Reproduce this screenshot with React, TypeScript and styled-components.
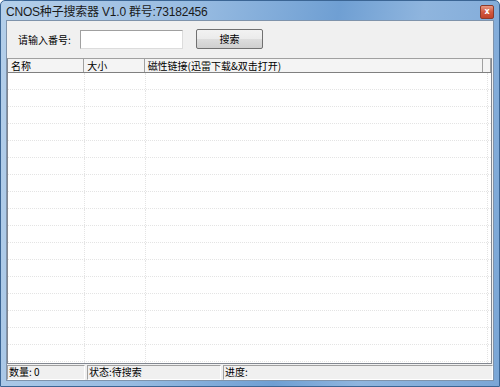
import React from 'react'
import styled, { createGlobalStyle } from 'styled-components'

const GlobalStyle = createGlobalStyle`
  html, body {
    margin: 0;
    padding: 0;
    background: #ffffff;
  }
  body {
    font-family: "Noto Sans CJK SC", "Liberation Sans", sans-serif;
    font-size: 10px;
  }
`

const Window = styled.div`
  width: 500px;
  height: 387px;
  box-sizing: border-box;
  display: flex;
  flex-direction: column;
  padding: 0 5px 5px 5px;
  background: linear-gradient(100deg, #b4cfea 0%, #97bbe1 35%, #6f9fd3 60%, #8fb5de 75%, #7aa6d6 100%);
  border: 1px solid #3b6594;
  border-radius: 5px 5px 0 0;
  overflow: hidden;
`

const TitleBar = styled.div`
  height: 19px;
  flex-shrink: 0;
  display: flex;
  align-items: center;
  justify-content: space-between;
`

const Title = styled.span`
  font-family: "Liberation Sans", "Noto Sans CJK SC", sans-serif;
  font-size: 12px;
  color: #1a1a1a;
  letter-spacing: -0.2px;
`

const CloseButton = styled.div`
  width: 12px;
  height: 12px;
  margin-top: 2px;
  display: flex;
  align-items: center;
  justify-content: center;
  border: 1px solid #8c3b2c;
  border-radius: 2px;
  background: linear-gradient(180deg, #e99a85 0%, #d2583f 50%, #c2432b 100%);
  color: #fff;
  font-family: "DejaVu Sans", sans-serif;
  font-size: 8px;
  font-weight: bold;
  line-height: 1;
`

const Client = styled.div`
  flex: 1;
  min-height: 0;
  display: flex;
  flex-direction: column;
  background: #f0f0f0;
  border: 1px solid #7f93ab;
`

const Toolbar = styled.div`
  height: 37px;
  flex-shrink: 0;
  display: flex;
  align-items: center;
  padding-left: 11px;
`

const Label = styled.span`
  width: 62px;
  flex-shrink: 0;
  white-space: nowrap;
  color: #000;
  font-size: 10px;
`

const TextInput = styled.input`
  width: 103px;
  height: 19px;
  box-sizing: border-box;
  margin: 0;
  border: 1px solid #a0a0a0;
  border-right-color: #dcdcdc;
  border-bottom-color: #dcdcdc;
  background: #fff;
  outline: none;
`

const Button = styled.button`
  width: 67px;
  height: 20px;
  margin: 0 0 2px 13px;
  padding: 0;
  box-sizing: border-box;
  border: 1px solid #707070;
  border-radius: 2px;
  background: linear-gradient(180deg, #f2f2f2 0%, #ebebeb 50%, #dddddd 51%, #cfcfcf 100%);
  font-family: "Noto Sans CJK SC", sans-serif;
  font-size: 10px;
  color: #000;
`

const ListView = styled.div`
  flex: 1;
  min-height: 0;
  display: flex;
  flex-direction: column;
  margin: 0 1px 0 0;
  border: 1px solid #828790;
  border-top-color: #a0a0a0;
  background: #fff;
  overflow: hidden;
`

const Header = styled.div`
  height: 13px;
  flex-shrink: 0;
  display: flex;
  background: #f4f4f4;
  border-bottom: 1px solid #808080;
`

const HeaderCell = styled.div<{ $w: number }>`
  width: ${p => p.$w}px;
  box-sizing: border-box;
  padding-left: 3px;
  border-right: 1px solid #a0a0a0;
  font-size: 10px;
  line-height: 13px;
  color: #000;
  white-space: nowrap;
`

const Body = styled.div`
  flex: 1;
  min-height: 0;
  display: flex;
  flex-direction: column;
  overflow: hidden;
`

const Row = styled.div`
  height: 17px;
  flex-shrink: 0;
  display: flex;
  box-sizing: border-box;
  border-bottom: 1px dotted #e4e4e4;
`

const Cell = styled.div<{ $w: number }>`
  width: ${p => p.$w}px;
  box-sizing: border-box;
  border-right: 1px dotted #e4e4e4;
`

const StatusBar = styled.div`
  height: 15px;
  flex-shrink: 0;
  display: flex;
  gap: 2px;
  padding-top: 1px;
  background: #f0f0f0;
`

const Panel = styled.div<{ $w?: number }>`
  ${p => (p.$w ? `width: ${p.$w}px;` : 'flex: 1;')}
  box-sizing: border-box;
  padding-left: 1px;
  border-top: 1px solid #a0a0a0;
  border-left: 1px solid #a0a0a0;
  border-bottom: 1px solid #ffffff;
  border-right: 1px solid #ffffff;
  font-size: 10px;
  line-height: 12px;
  color: #000;
  white-space: nowrap;
`

const columns = [77, 61, 342, 8]

export default function App() {
  const rows = Array.from({ length: 18 })
  return (
    <>
      <GlobalStyle />
      <Window>
        <TitleBar>
          <Title>CNOS种子搜索器 V1.0 群号:73182456</Title>
          <CloseButton>x</CloseButton>
        </TitleBar>
        <Client>
          <Toolbar>
            <Label>请输入番号:</Label>
            <TextInput />
            <Button>搜索</Button>
          </Toolbar>
          <ListView>
            <Header>
              <HeaderCell $w={columns[0]}>名称</HeaderCell>
              <HeaderCell $w={columns[1]}>大小</HeaderCell>
              <HeaderCell $w={columns[2]}>磁性链接(迅雷下载&双击打开)</HeaderCell>
              <HeaderCell $w={columns[3]} />
            </Header>
            <Body>
              {rows.map((_, i) => (
                <Row key={i}>
                  <Cell $w={columns[0]} />
                  <Cell $w={columns[1]} />
                  <Cell $w={columns[2]} />
                </Row>
              ))}
            </Body>
          </ListView>
          <StatusBar>
            <Panel $w={78}>数量: 0</Panel>
            <Panel $w={134}>状态:待搜索</Panel>
            <Panel>进度:</Panel>
          </StatusBar>
        </Client>
      </Window>
    </>
  )
}
